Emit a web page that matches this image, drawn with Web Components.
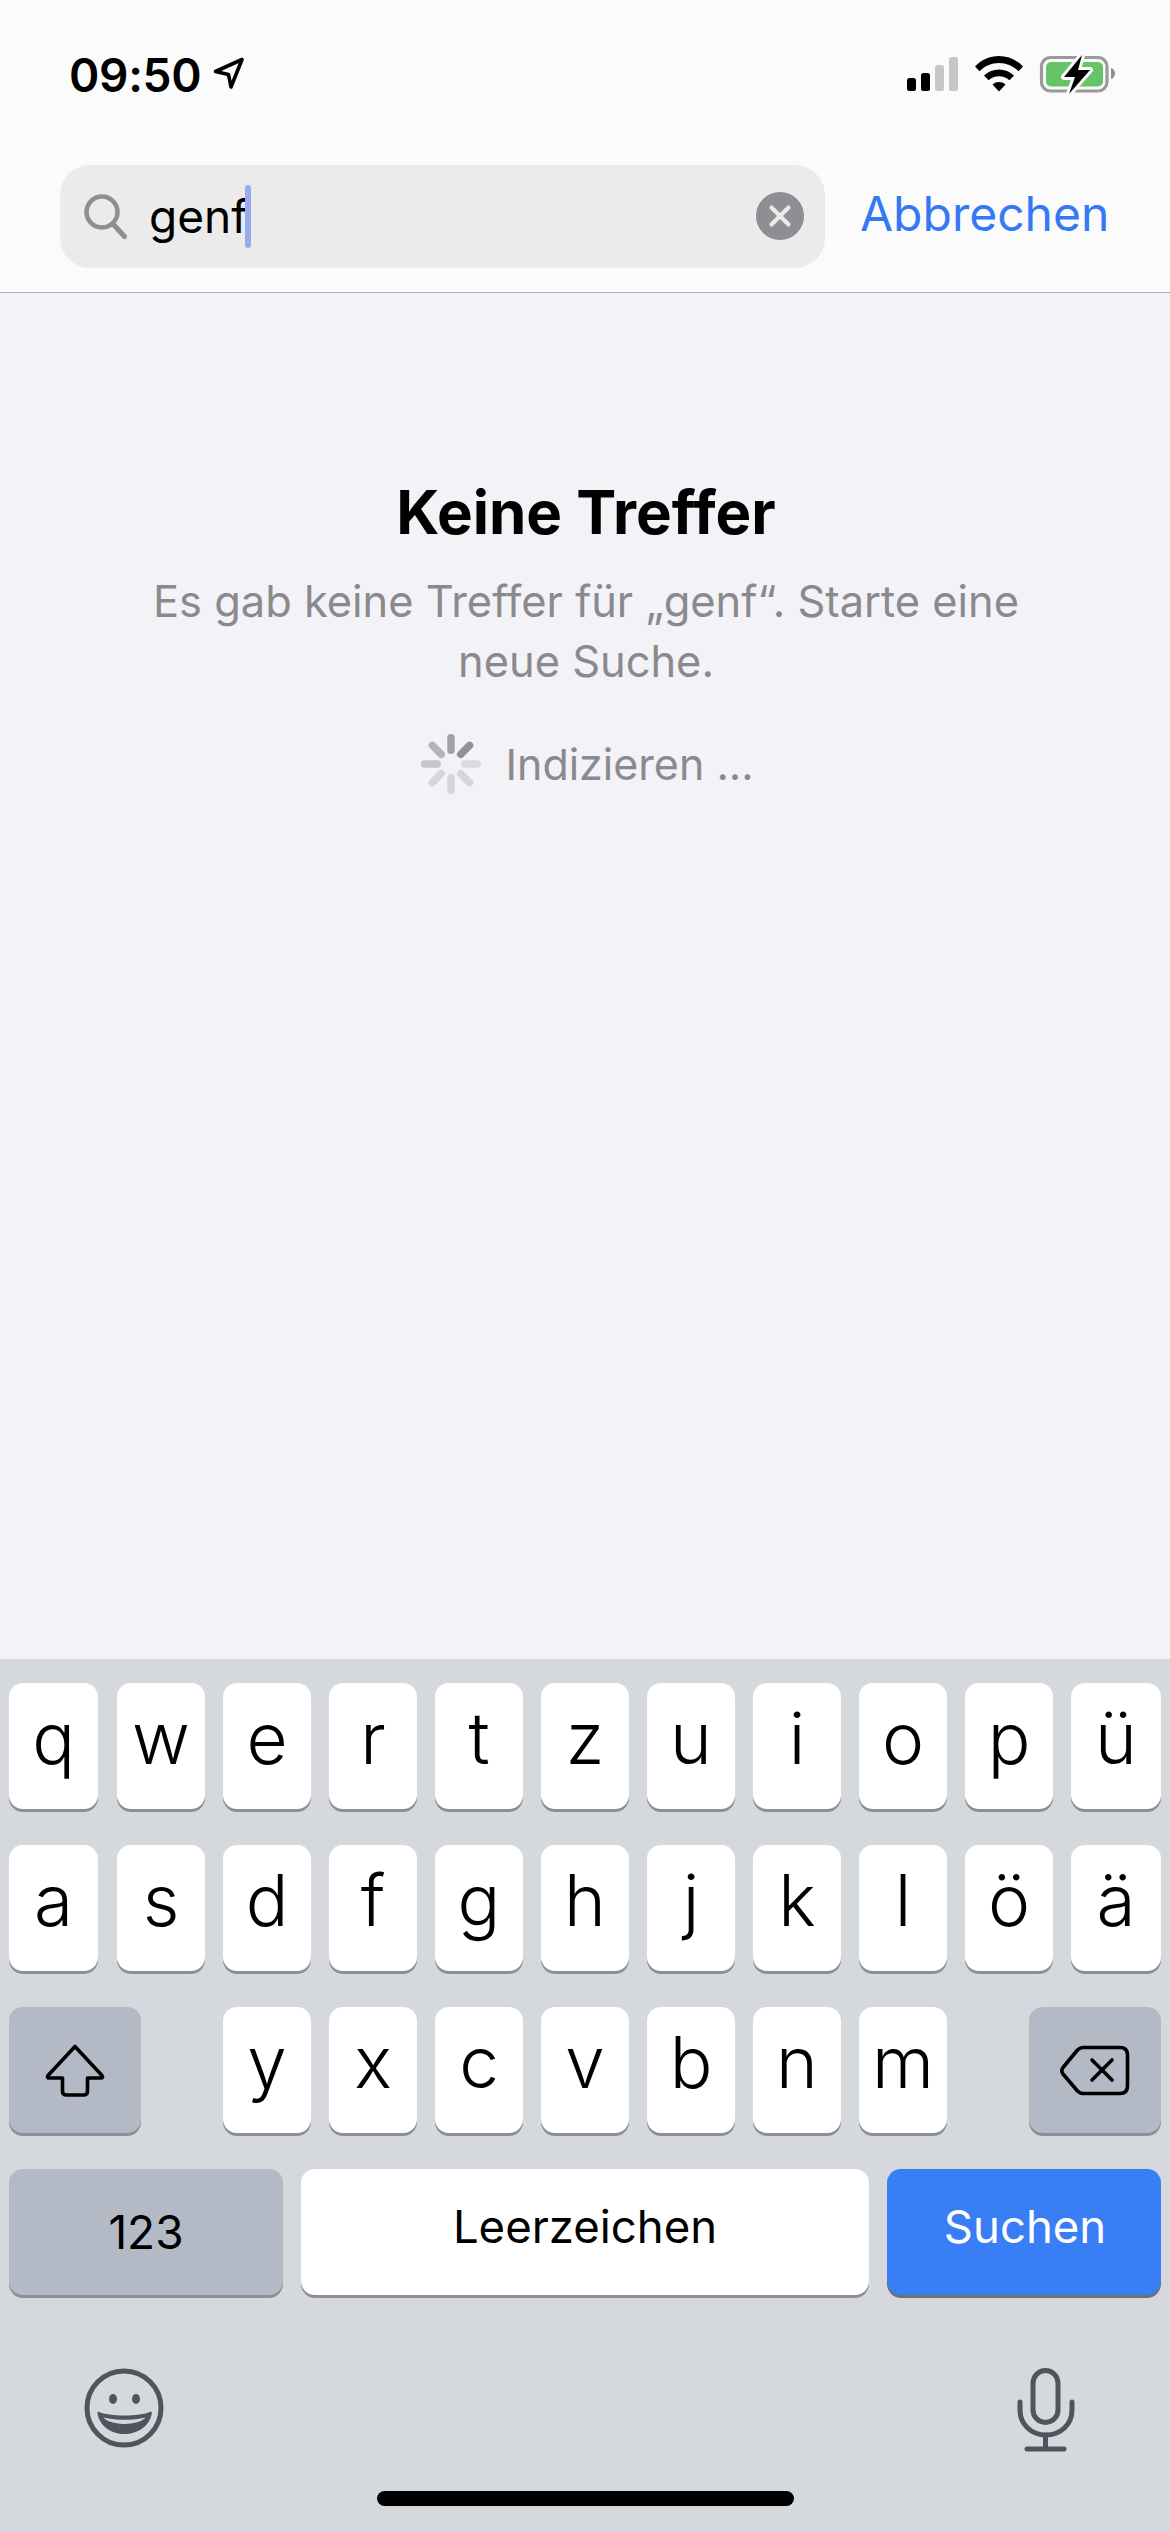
<!DOCTYPE html>
<html lang="de">
<head>
<meta charset="utf-8">
<title>Suche</title>
<style>
  html, body { margin: 0; padding: 0; }
  body { width: 1170px; height: 2532px; overflow: hidden; font-family: Inter, "Noto Sans", sans-serif; background: #f2f2f7; }
  search-screen { height: 2532px; }
</style>
</head>
<body>
<search-screen>
  <status-bar time="09:50"></status-bar>
  <search-header query="genf" action="Abbrechen"></search-header>
  <empty-state title="Keine Treffer" status="Indizieren ...">Es gab keine Treffer für „genf“. Starte eine<br>neue Suche.</empty-state>
  <ios-keyboard></ios-keyboard>
</search-screen>

<script>
// Page shell: column with the empty state taking whatever is left
class SearchScreen extends HTMLElement {
  constructor() {
    super();
    this.attachShadow({ mode: 'open' });
    this.shadowRoot.innerHTML = `
      <style>
        :host { display: flex; flex-direction: column; }
        ::slotted(empty-state) { flex: 1; }
      </style>
      <slot></slot>`;
  }
}

class StatusBar extends HTMLElement {
  constructor() {
    super();
    this.attachShadow({ mode: 'open' });
    this.shadowRoot.innerHTML = `
      <style>
        :host { display: flex; height: 165px; box-sizing: border-box; padding: 55px 55px 0 69px; justify-content: space-between; align-items: flex-start; background: #fbfbfb; }
        .time { display: flex; align-items: flex-start; gap: 12px; }
        .clock { font: 600 46px/40px Inter, sans-serif; color: #000; letter-spacing: -0.3px; }
        svg { display: block; }
      </style>
      <div class="time">
        <span class="clock"></span>
        <svg width="32" height="34" viewBox="0 0 32 34" style="margin-top:2px"><path d="M2.5 14.5 29 2.5 18 30 15.5 17.5Z" fill="none" stroke="#000" stroke-width="3.6" stroke-linejoin="round"/></svg>
      </div>
      <svg width="208" height="40" viewBox="907 55 208 40">
        <rect x="907" y="78" width="9" height="13" rx="2.5" fill="#000"/>
        <rect x="921" y="73" width="9" height="18" rx="2.5" fill="#000"/>
        <rect x="935" y="65" width="9" height="26" rx="2.5" fill="#c6c6c6"/>
        <rect x="949" y="57" width="9" height="34" rx="2.5" fill="#c6c6c6"/>
        <path d="M975 66.5C981 60 990 56 999 56s18 4 24 10.500l-4.500 4.800C1013.500 66 1006.500 63 999 63s-14.500 3-19.500 8.300Z" fill="#000"/>
        <path d="M984 75.500C988 71.500 993.500 69.500 999 69.500s11 2 15 6l-4.600 4.800C1006.500 77.500 1003 76.200 999 76.200s-7.500 1.300-10.400 4.100Z" fill="#000"/>
        <path d="M992.500 84.500C994.300 82.800 996.500 82 999 82s4.700.8 6.500 2.500L999 91.500Z" fill="#000"/>
        <rect x="1041.500" y="57.500" width="65.500" height="33.500" rx="9" fill="none" stroke="#9a9a9a" stroke-width="3.200"/>
        <rect x="1046" y="62" width="57" height="24.500" rx="5" fill="#65c466"/>
        <path d="M1111 68c2.500.8 4 3 4 5.500s-1.500 4.700-4 5.500Z" fill="#8e8e8e"/>
        <path d="M1082 55 1064 77H1075L1069 94 1090 70H1078Z" fill="#000" stroke="#fbfbfb" stroke-width="6" stroke-linejoin="round" paint-order="stroke"/>
      </svg>`;
    this.shadowRoot.querySelector('.clock').textContent = this.getAttribute('time');
  }
}

class SearchHeader extends HTMLElement {
  constructor() {
    super();
    this.attachShadow({ mode: 'open' });
    this.shadowRoot.innerHTML = `
      <style>
        :host { display: flex; height: 128px; box-sizing: border-box; padding: 0 63px 25px 60px; gap: 35px; align-items: center; background: #fbfbfb; border-bottom: 1px solid #b2b2b2; font-family: Inter, sans-serif; }
        .field { display: flex; align-items: center; flex: none; width: 765px; height: 103px; box-sizing: border-box; padding: 0 21px 0 23px; border-radius: 30px; background: #ebebeb; }
        .query { font-size: 46px; line-height: 60px; color: #000; margin-left: 22px; display: flex; align-items: center; }
        .caret { width: 6px; height: 63px; border-radius: 3px; background: #9aaaef; margin-left: -3px; }
        .clear { margin-left: auto; }
        .action { font-size: 48px; line-height: 60px; color: #3478f6; white-space: nowrap; margin-bottom: 4px; }
        svg { display: block; flex: none; }
      </style>
      <div class="field">
        <svg width="44" height="46" viewBox="0 0 44 46"><circle cx="19" cy="19" r="15.500" fill="none" stroke="#8e8e93" stroke-width="4.500"/><path d="M30 31 41.500 43.500" stroke="#8e8e93" stroke-width="5" stroke-linecap="round"/></svg>
        <span class="query"><span class="text"></span><span class="caret"></span></span>
        <svg class="clear" width="48" height="48" viewBox="0 0 48 48"><circle cx="24" cy="24" r="24" fill="#8e8e93"/><path d="M15.500 15.500 32.500 32.500M32.500 15.500 15.500 32.500" stroke="#ebebeb" stroke-width="4.200" stroke-linecap="round"/></svg>
      </div>
      <span class="action"></span>`;
    this.shadowRoot.querySelector('.text').textContent = this.getAttribute('query');
    this.shadowRoot.querySelector('.action').textContent = this.getAttribute('action');
  }
}

class EmptyState extends HTMLElement {
  constructor() {
    super();
    this.attachShadow({ mode: 'open' });
    // 8 spokes, darkest at one o'clock, fading clockwise
    const shades = ['#a2a2a7', '#929297', '#dadade', '#d6d6da', '#d4d4d8', '#d6d6da', '#c6c6ca', '#b4b4b9'];
    const spokes = shades
      .map((c, i) => `<rect x="-3.750" y="-30" width="7.500" height="20" rx="3.750" fill="${c}" transform="rotate(${i * 45})"/>`)
      .join('');
    this.shadowRoot.innerHTML = `
      <style>
        :host { display: flex; flex-direction: column; align-items: center; box-sizing: border-box; padding: 183px 0 0 2px; font-family: Inter, sans-serif; text-align: center; }
        h2 { margin: 0; font-size: 60px; line-height: 72px; font-weight: 700; color: #000; letter-spacing: 0; }
        p { margin: 23px 0 0; font-size: 43.4px; line-height: 60px; color: #8a8a8e; }
        .status { display: flex; align-items: center; gap: 24px; margin: 43px 0 0 3px; font-size: 43px; line-height: 60px; color: #8a8a8e; }
        svg { display: block; }
      </style>
      <h2></h2>
      <p><slot></slot></p>
      <div class="status">
        <svg width="60" height="60" viewBox="-30 -30 60 60">${spokes}</svg>
        <span class="label"></span>
      </div>`;
    this.shadowRoot.querySelector('h2').textContent = this.getAttribute('title');
    this.shadowRoot.querySelector('.label').textContent = this.getAttribute('status');
  }
}

class KbKey extends HTMLElement {
  constructor() {
    super();
    this.attachShadow({ mode: 'open' });
    this.shadowRoot.innerHTML = `
      <style>
        :host { display: flex; align-items: center; justify-content: center; box-sizing: border-box; height: 126px; flex: none; border-radius: 14px; background: #fff; color: #000; box-shadow: 0 3px 0 #8e8f94; font-family: Inter, sans-serif; font-weight: 300; font-size: 71px; line-height: 1; padding-bottom: 16px; }
        :host([kind="fn"]) { background: #b3b9c5; font-size: 46px; font-weight: 400; padding-bottom: 0; }
        :host([kind="wide"]) { font-size: 45.5px; font-weight: 400; padding-bottom: 10px; }
        :host([kind="go"]) { background: #3a7ef6; color: #fff; font-size: 45.5px; font-weight: 400; padding: 0 0 10px 2px; box-shadow: 0 3px 0 #6f7174; }
      </style>
      <slot></slot>`;
  }
}

class IosKeyboard extends HTMLElement {
  constructor() {
    super();
    this.attachShadow({ mode: 'open' });
    this.shadowRoot.innerHTML = `
      <style>
        :host { display: flex; flex-direction: column; height: 873px; box-sizing: border-box; padding: 24px 9px 0; gap: 36px; background: #d5d8dd; }
        .row { display: flex; gap: 18px; }
        .row.third { justify-content: space-between; }
        .letters { display: flex; gap: 18px; }
        .tools { display: flex; justify-content: space-between; align-items: flex-start; margin: 37px 0 0 75px; padding-right: 86px; }
        svg { display: block; }
        .bar { width: 417px; height: 15px; border-radius: 8px; background: #000; align-self: center; margin-top: 3px; }
      </style>
      <div class="row" id="r1"></div>
      <div class="row" id="r2"></div>
      <div class="row third">
        <kb-key kind="fn" style="width:132px">
          <svg width="60" height="53" viewBox="0 0 60 53"><path d="M30 2.500 3 31.500C2 32.800 2.500 34 4 34H17.500V47C17.500 49.500 19 51 21.500 51H38.500C41 51 42.500 49.500 42.500 47V34H56C57.500 34 58 32.800 57 31.500Z" fill="none" stroke="#000" stroke-width="3.600" stroke-linejoin="round"/></svg>
        </kb-key>
        <div class="letters" id="r3"></div>
        <kb-key kind="fn" style="width:132px">
          <svg width="70" height="51" viewBox="0 0 70 51"><path d="M23 2.500H60C65 2.500 67.500 5 67.500 10V41C67.500 46 65 48.500 60 48.500H23C20.500 48.500 19 47.500 17.500 46L3 29C1.500 27 1.500 24.500 3 22.500L17.500 5C19 3.500 20.500 2.500 23 2.500Z" fill="none" stroke="#000" stroke-width="3.600" stroke-linejoin="round"/><path d="M32 15 52 35M52 15 32 35" stroke="#000" stroke-width="3.600" stroke-linecap="round"/></svg>
        </kb-key>
      </div>
      <div class="row">
        <kb-key kind="fn" style="width:274px">123</kb-key>
        <kb-key kind="wide" style="width:568px">Leerzeichen</kb-key>
        <kb-key kind="go" style="width:274px">Suchen</kb-key>
      </div>
      <div class="tools">
        <svg width="80" height="80" viewBox="0 0 80 80">
          <circle cx="40" cy="40" r="37" fill="none" stroke="#50545c" stroke-width="5"/>
          <ellipse cx="29" cy="31" rx="4" ry="5" fill="#50545c"/><ellipse cx="52" cy="31" rx="4" ry="5" fill="#50545c"/>
          <path d="M15 44C20 46 30 47.500 40.500 47.500S61 46 66 44C67.500 43.500 68 44.200 67.800 45.500 65.500 58 54 66 40.500 66S15.500 58 13.500 45.500C13.300 44.200 13.800 43.500 15 44Z" fill="#50545c"/>
          <path d="M19.500 49.500C26 51 33 51.800 40.500 51.800S55 51 61.500 49.500C60 52 52 56 40.500 56S21 52 19.500 49.500Z" fill="#d5d8dd"/>
        </svg>
        <svg width="58" height="84" viewBox="0 0 58 84">
          <rect x="16" y="2.500" width="25" height="52" rx="12.500" fill="none" stroke="#50545c" stroke-width="5"/>
          <path d="M3 34V42C3 56 14 67 29 67S55 56 55 42V34" fill="none" stroke="#50545c" stroke-width="5" stroke-linecap="round"/>
          <path d="M28.500 67V80M10 81H47" stroke="#50545c" stroke-width="5" stroke-linecap="round"/>
        </svg>
      </div>
      <div class="bar"></div>`;
    const fill = (id, letters) => {
      const row = this.shadowRoot.getElementById(id);
      letters.forEach(ch => {
        const key = document.createElement('kb-key');
        key.textContent = ch;
        key.style.width = '88px';
        row.appendChild(key);
      });
      return row;
    };
    const r1 = fill('r1', [...'qwertzuiopü']);
    const r2 = fill('r2', [...'asdfghjklöä']);
    // The outer keys of the two top rows are a little wider than the rest
    [r1, r2].forEach(row => {
      row.firstChild.style.width = '89px';
      row.firstChild.style.marginRight = '1px';
      row.lastChild.style.width = '90px';
    });
    fill('r3', [...'yxcvbnm']);
  }
}

customElements.define('search-screen', SearchScreen);
customElements.define('status-bar', StatusBar);
customElements.define('search-header', SearchHeader);
customElements.define('empty-state', EmptyState);
customElements.define('kb-key', KbKey);
customElements.define('ios-keyboard', IosKeyboard);
</script>
</body>
</html>
